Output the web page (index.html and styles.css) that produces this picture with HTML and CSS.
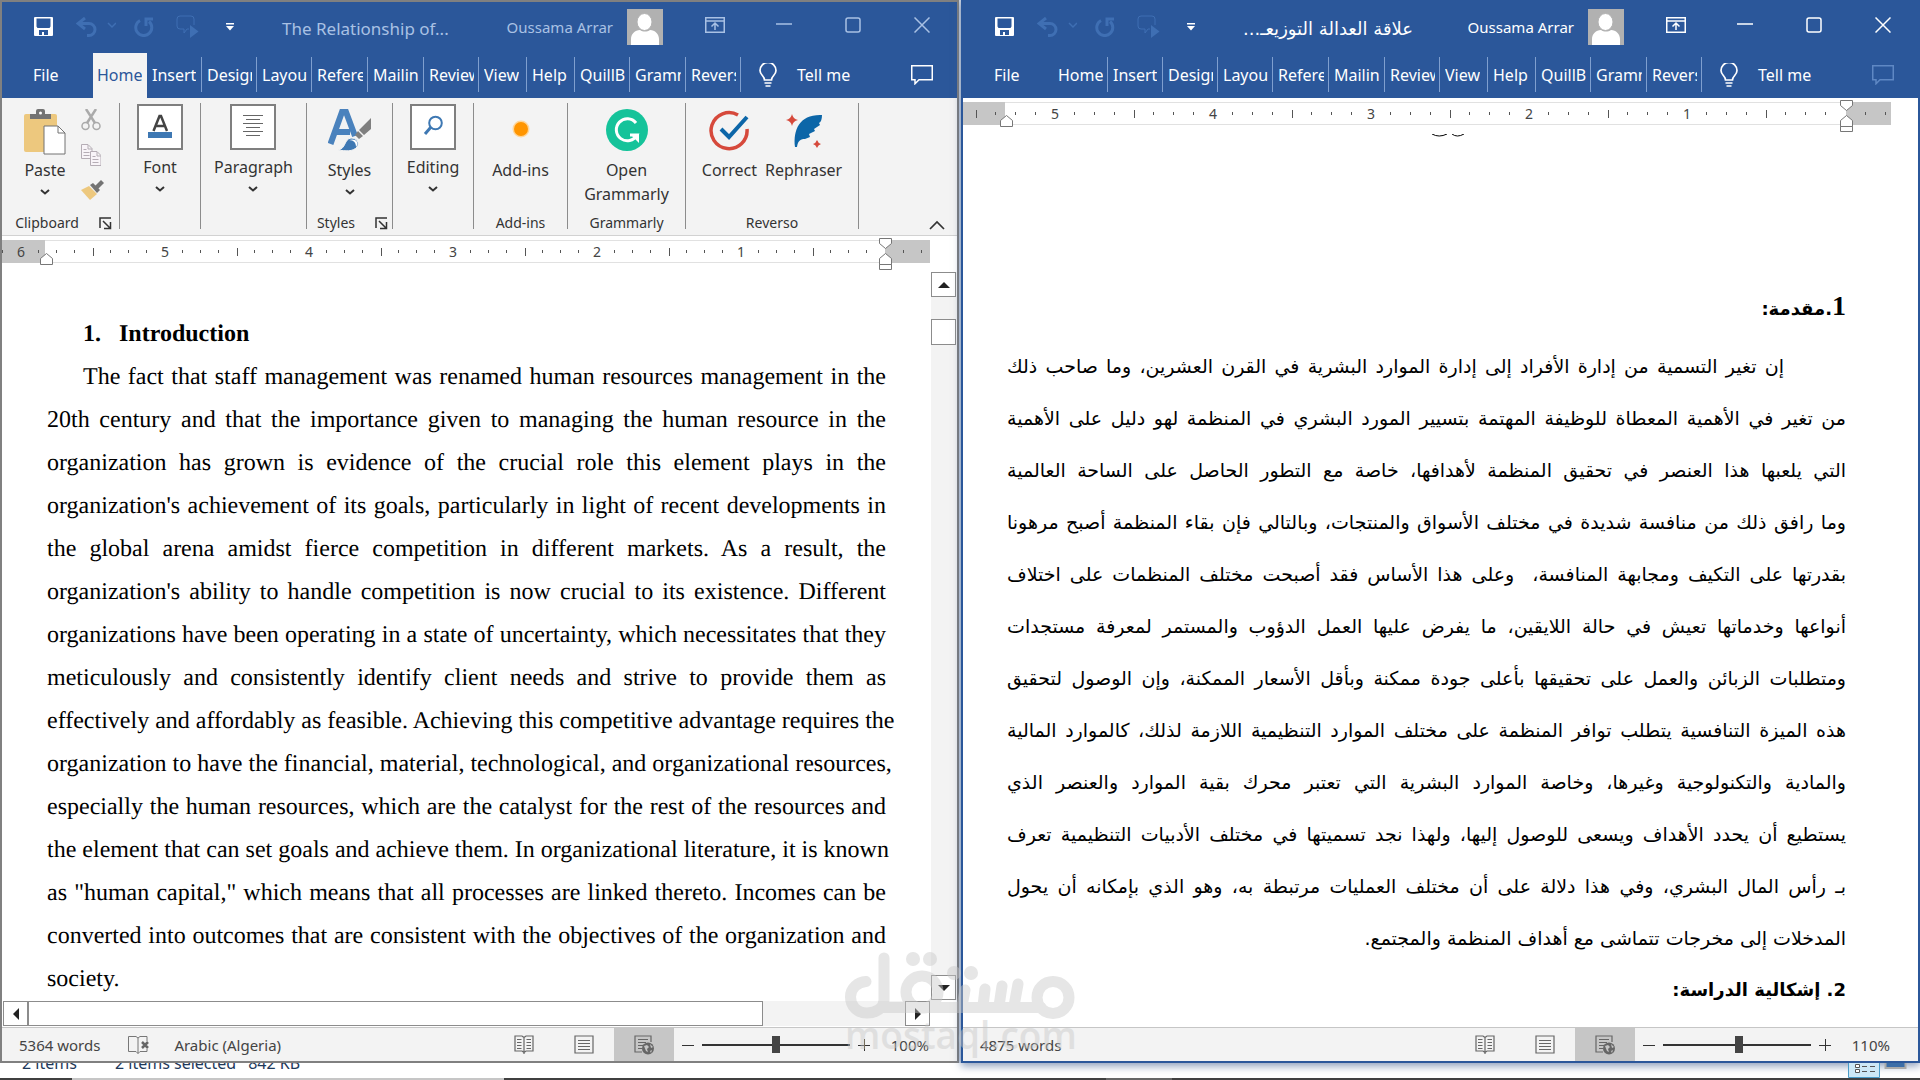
FILE: index.html
```html
<!DOCTYPE html>
<html lang="en">
<head>
<meta charset="utf-8">
<title>Word - side by side</title>
<link rel="stylesheet" href="styles.css">
</head>
<body>
<svg class="defs" aria-hidden="true">
  <symbol id="i-save" viewBox="0 0 19 19"><path fill="currentColor" fill-rule="evenodd" d="M0 1a1 1 0 0 1 1-1h17a1 1 0 0 1 1 1v17a1 1 0 0 1-1 1H1a1 1 0 0 1-1-1zM2.500 1.500v8l1 1.500h12l1-1.500v-8zM5 13v5h3v-3h2v3h4v-5z"/></symbol>
  <symbol id="i-undo" viewBox="0 0 40 20"><path d="M9 1 2 6.500l7 5.500M3 6.500h10a6 6 0 0 1 0 12h-2" fill="none" stroke="currentColor" stroke-width="3"/><path d="m32 6 4 4 4-4" fill="none" stroke="currentColor" stroke-width="1.500"/></symbol>
  <symbol id="i-redo" viewBox="0 0 20 20"><path d="M6 3.500a8 8 0 1 0 9 1" fill="none" stroke="currentColor" stroke-width="3"/><path d="M12 9V2h7" fill="none" stroke="currentColor" stroke-width="3"/></symbol>
  <symbol id="i-present" viewBox="0 0 23 24"><path d="M13 14h-2l-3 4v-4H4a3 3 0 0 1-3-3V4a3 3 0 0 1 3-3h11a3 3 0 0 1 3 3v6" fill="none" stroke="currentColor" stroke-width="1"/><path d="m14 10 8.500 6.500L14 23z" fill="currentColor"/></symbol>
  <symbol id="i-custom" viewBox="0 0 8 8"><path d="M0 0h8v1.500H0zM0 3h8L4 7.500z" fill="currentColor"/></symbol>
  <symbol id="i-ribbonopt" viewBox="0 0 20 16"><path d="M.75.75h18.500v14.500H.75zM1 4h18M10 13V6.500M6.500 9.500 10 6l3.500 3.500" fill="none" stroke="currentColor" stroke-width="1.500"/></symbol>
  <symbol id="i-min" viewBox="0 0 16 16"><path d="M0 7h16" stroke="currentColor" stroke-width="1.500"/></symbol>
  <symbol id="i-max" viewBox="0 0 16 16"><rect x="1" y="1" width="14" height="14" rx="2" fill="none" stroke="currentColor" stroke-width="1.500"/></symbol>
  <symbol id="i-close" viewBox="0 0 16 16"><path d="m.5.5 15 15m0-15-15 15" stroke="currentColor" stroke-width="1.500"/></symbol>
  <symbol id="i-avatar" viewBox="0 0 36 36"><path fill="#b1b1b1" d="M0 0h36v36H0z"/><path fill="#fff" d="M4 36v-6c0-5 4-9 9-9 3 2 7 2 10 0 5 0 9 4 9 9v6z"/><ellipse cx="17.500" cy="13" rx="7.500" ry="8.500" fill="#fff" stroke="#b1b1b1"/></symbol>
  <symbol id="i-bulb" viewBox="0 0 18 24"><path d="M5.500 17c0-4-4.500-5-4.500-9.500a8 8 0 0 1 16 0C17 12 12.500 13 12.500 17zM5.500 20h7M6.500 23h5" fill="none" stroke="currentColor" stroke-width="1.700"/></symbol>
  <symbol id="i-comment" viewBox="0 0 22 20"><path d="M.75.75h20.500v14H8l-4 4v-4H.75z" fill="none" stroke="currentColor" stroke-width="1.500"/></symbol>
  <symbol id="i-chev" viewBox="0 0 10 6"><path d="m1 1 4 3.500L9 1" fill="none" stroke="#333" stroke-width="2"/></symbol>
  <symbol id="i-launch" viewBox="0 0 13 13"><path d="M1 11V1h11M4 4l7 7M11.500 5v6.500H5" fill="none" stroke="#333" stroke-width="1.500"/></symbol>
  <symbol id="i-read" viewBox="0 0 20 19"><path d="M1 1h7l2 1.500L12 1h7v15h-7l-2 1.500L8 16H1zM10 2v17M3 4.500h4.500M3 7.500h4.500M3 10.500h4.500M3 13.500h4.500M12.500 4.500H17M12.500 7.500H17M12.500 10.500H17M12.500 13.500H17" fill="none" stroke="#666" stroke-width="1.200"/></symbol>
  <symbol id="i-print" viewBox="0 0 20 19"><path d="M1 1h18v17H1zM4 5.500h12M4 8.500h12M4 11.500h12M4 14.500h12" fill="none" stroke="#666" stroke-width="1.200"/></symbol>
  <symbol id="i-web" viewBox="0 0 20 20"><path d="M8 17H1V1h16v6M4 4.500h10M4 7.500h8M4 10.500h5M4 13.500h4" fill="none" stroke="#666" stroke-width="1.200"/><circle cx="14" cy="13.500" r="6" fill="#666"/><path d="m10 11 3-1 2 2-2 2 1 3-2-1zM16 9l3 3-2 1zM16 16l2-1-1 3z" fill="#c6c6c6"/></symbol>
</svg>

<main class="desktop">
  <section class="window inactive" lang="en">
    <header class="titlebar">
      <button class="qa save" aria-label="Save"><svg width="19" height="19"><use href="#i-save"/></svg></button>
      <button class="qa undo off" aria-label="Undo"><svg width="40" height="20"><use href="#i-undo"/></svg></button>
      <button class="qa redo off" aria-label="Repeat"><svg width="20" height="20"><use href="#i-redo"/></svg></button>
      <button class="qa present off" aria-label="Present"><svg width="23" height="24"><use href="#i-present"/></svg></button>
      <button class="qa redo" aria-label="Customize"><svg width="8" height="8"><use href="#i-custom"/></svg></button>
      <h1 class="doc-title">The Relationship of...</h1>
      <span class="user">Oussama Arrar</span>
      <svg class="avatar" width="36" height="36"><use href="#i-avatar"/></svg>
      <button class="win-btn" aria-label="Ribbon options"><svg width="20" height="16"><use href="#i-ribbonopt"/></svg></button>
      <button class="win-btn" aria-label="Minimize"><svg width="16" height="16"><use href="#i-min"/></svg></button>
      <button class="win-btn" aria-label="Maximize"><svg width="16" height="16"><use href="#i-max"/></svg></button>
      <button class="win-btn" aria-label="Close"><svg width="16" height="16"><use href="#i-close"/></svg></button>
    </header>
    <nav class="tabs">
      <button class="file">File</button>
      <button class="tab active"><span>Home</span></button>
      <button class="tab"><span>Insert</span></button>
      <button class="tab"><span>Design</span></button>
      <button class="tab"><span>Layout</span></button>
      <button class="tab wide"><span>References</span></button>
      <button class="tab wide"><span>Mailings</span></button>
      <button class="tab"><span>Review</span></button>
      <button class="tab narrow"><span>View</span></button>
      <button class="tab narrow"><span>Help</span></button>
      <button class="tab"><span>QuillBot</span></button>
      <button class="tab wide"><span>Grammarly</span></button>
      <button class="tab"><span>Reverso</span></button>
      <button class="tell"><svg width="18" height="24"><use href="#i-bulb"/></svg>Tell me</button>
      <button class="comment" aria-label="Comments"><svg width="22" height="20"><use href="#i-comment"/></svg></button>
    </nav>

    <div class="ribbon">
      <div class="group clipboard">
        <div class="group-body">
          <button class="big">
            <svg width="42" height="46" viewBox="0 0 42 46"><rect y="5" width="33" height="38" rx="2" fill="#edc87e"/><path d="M6 10V5h6V2a2 2 0 0 1 2-2h5a2 2 0 0 1 2 2v3h6v5z" fill="#737373"/><circle cx="16.500" cy="4" r="1.500" fill="#fff"/><path d="M20 17h14l7 7v21H20z" fill="#fff" stroke="#737373"/><path d="M34 17v7h7" fill="none" stroke="#737373"/></svg>
            <span>Paste</span><svg width="10" height="6"><use href="#i-chev"/></svg>
          </button>
          <div class="small-tools">
            <button aria-label="Cut"><svg width="20" height="22" viewBox="0 0 20 22"><path d="m5 0 9 14M15 0 6 14" stroke="#aaa" stroke-width="2.500"/><circle cx="4.500" cy="17" r="3.500" fill="none" stroke="#aaa" stroke-width="1.500"/><circle cx="15.500" cy="17" r="3.500" fill="none" stroke="#aaa" stroke-width="1.500"/></svg></button>
            <button aria-label="Copy"><svg width="20" height="22" viewBox="0 0 20 22"><g fill="#f8f4f8" stroke="#b5adb5"><path d="M.5.5H7l4 4v10H.5zM7 1v4h4M2.500 5.500h3m-3 3h6m-6 3h6"/><path d="M9.500 7.500H16l4 4v10H9.500zM16 8v4h4m-8.500.500h3m-3 3h6m-6 3h6"/></g></svg></button>
            <button aria-label="Format painter"><svg width="23" height="20" viewBox="0 0 23 20"><path d="m0 10 8-4 8 8-7 6z" fill="#edc87e"/><path d="m9 5 3-2 7 7-3 3z" fill="#737373"/><path d="m14 6 6-6 3 3-6 6z" fill="#737373"/></svg></button>
          </div>
        </div>
        <div class="group-label with-launcher"><span>Clipboard</span><button aria-label="Clipboard options"><svg width="13" height="13"><use href="#i-launch"/></svg></button></div>
      </div>
      <div class="group g-font">
        <div class="group-body"><button class="big boxed">
          <svg width="46" height="46" viewBox="0 0 46 46"><path d="M1 1h44v44H1z" fill="#fff" stroke="#7f7f7f" stroke-width="2"/><path d="m16.500 27 6-15h1.500l6 15M19 22h9" fill="none" stroke="#444" stroke-width="2.500"/><path d="M11 28h24v6H11z" fill="#3e78b3"/></svg>
          <span>Font</span><svg width="10" height="6"><use href="#i-chev"/></svg></button></div>
      </div>
      <div class="group g-para">
        <div class="group-body"><button class="big boxed">
          <svg width="46" height="46" viewBox="0 0 46 46"><path d="M1 1h44v44H1z" fill="#fff" stroke="#7f7f7f" stroke-width="2"/><path d="M13 11.500h20M16 15.500h14M13 19.500h20M16 23.500h14M13 27.500h20M16 31.500h14" stroke="#666"/></svg>
          <span>Paragraph</span><svg width="10" height="6"><use href="#i-chev"/></svg></button></div>
      </div>
      <div class="group g-styles">
        <div class="group-body"><button class="big">
          <svg width="44" height="46" viewBox="0 0 44 46"><path d="M2.500 35 14 3h4l9 24M7 23h15" fill="none" stroke="#4a82bd" stroke-width="6"/><path d="M43 9v11l-7 6-5-5zM30 22l5 5-4 3-4-4z" fill="#7f7f7f"/><path d="M10 41c8-1 6-11 13-12 6 0 9 5 6 9-4 5-12 4-19 3z" fill="#3e78b3" stroke="#f3f3f3"/><path d="M21 31c5 0 7 3 7 7 4-5-1-9-7-7z" fill="#fff"/></svg>
          <span>Styles</span><svg width="10" height="6"><use href="#i-chev"/></svg></button></div>
        <div class="group-label with-launcher"><span>Styles</span><button aria-label="Styles options"><svg width="13" height="13"><use href="#i-launch"/></svg></button></div>
      </div>
      <div class="group g-font">
        <div class="group-body"><button class="big boxed">
          <svg width="46" height="46" viewBox="0 0 46 46"><path d="M1 1h44v44H1z" fill="#fff" stroke="#7f7f7f" stroke-width="2"/><circle cx="25.500" cy="19" r="6.300" fill="none" stroke="#3e78b3" stroke-width="2"/><path d="m21 23-6 7" stroke="#3e78b3" stroke-width="3"/></svg>
          <span>Editing</span><svg width="10" height="6"><use href="#i-chev"/></svg></button></div>
      </div>
      <div class="group g-addins">
        <div class="group-body"><button class="big">
          <svg width="44" height="46" viewBox="0 0 44 46"><circle cx="22" cy="20" r="8.500" fill="#ffd699"/><circle cx="22" cy="20" r="7" fill="#ff9500"/></svg>
          <span>Add-ins</span></button></div>
        <div class="group-label"><span>Add-ins</span></div>
      </div>
      <div class="group g-gram">
        <div class="group-body"><button class="big">
          <svg width="44" height="46" viewBox="0 0 44 46"><circle cx="22" cy="21" r="21" fill="#15c39a"/><path d="M31 14a11 11 0 1 0 1 12h-7" fill="none" stroke="#fff" stroke-width="3"/><path d="M25 25h9v9z" fill="#fff"/></svg>
          <span>Open<br>Grammarly</span></button></div>
        <div class="group-label"><span>Grammarly</span></div>
      </div>
      <div class="group g-reverso">
        <div class="group-body">
          <button class="big"><svg width="44" height="46" viewBox="0 0 44 46"><path d="M31 6A18 18 0 1 0 40 20" fill="none" stroke="#d6493b" stroke-width="3.500"/><path d="m14 20 8 8L40 8" fill="none" stroke="#0c66a8" stroke-width="4"/></svg><span>Correct</span></button>
          <button class="big"><svg width="44" height="46" viewBox="0 0 44 46"><path d="M13 38C11 20 18 5 40 6c0 4-1 7-3 8l1 2-6 4 1 2-6 3 1 3-5 2c-4 0-7 1-8 8z" fill="#0c66a8"/><path d="M10 5q1 5 6 6-5 1-6 6-1-5-6-6 5-1 6-6zM35 31q1 3 4 4-3 1-4 4-1-3-4-4 3-1 4-4z" fill="#d6493b"/></svg><span>Rephraser</span></button>
        </div>
        <div class="group-label"><span>Reverso</span></div>
      </div>
      <button class="collapse" aria-label="Collapse ribbon"><svg width="16" height="10" viewBox="0 0 16 10"><path d="m1 9 7-7 7 7" fill="none" stroke="#333" stroke-width="1.700"/></svg></button>
    </div>

    <div class="ruler">
      <svg width="928" height="36" viewBox="0 0 928 36">
        <defs><pattern id="t144" x="18" width="144" height="36" patternUnits="userSpaceOnUse"><path d="M18.500 14v3M36.500 14v3M54.500 14v3M73.500 12v8M90.500 14v3M108.500 14v3M126.500 14v3" stroke="#555"/></pattern></defs>
        <path d="M0 4.500h928M0 26.500h928" stroke="#e1e1e1"/><path d="M0 4h43v23H0zM883 4h45v23h-45z" fill="#c6c6c6"/>
        <path d="M0 0h883v36H0z" fill="url(#t144)"/><path d="M901.500 14v3M919.500 14v3" stroke="#555"/>
        <g class="nums"><text x="19" y="21">6</text><text x="163" y="21">5</text><text x="307" y="21">4</text><text x="451" y="21">3</text><text x="595" y="21">2</text><text x="739" y="21">1</text></g>
        <path d="M38.500 28.500v-6l6-5 6 5v6zM877.500 2.500h12v5l-6 5-6-5zM877.500 28.500v-6l6-5 6 5v6zM877.500 28.500h12v5h-12z" fill="#fff" stroke="#777"/>
      </svg>
    </div>

    <div class="doc-row">
      <article class="page page-en">
        <h2><span class="num">1.</span>Introduction</h2>
        <p>
          <span class="line first">The fact that staff management was renamed human resources management in the</span>
          <span class="line">20th century and that the importance given to managing the human resource in the</span>
          <span class="line">organization has grown is evidence of the crucial role this element plays in the</span>
          <span class="line">organization's achievement of its goals, particularly in light of recent developments in</span>
          <span class="line">the global arena amidst fierce competition in different markets. As a result, the</span>
          <span class="line">organization's ability to handle competition is now crucial to its existence. Different</span>
          <span class="line">organizations have been operating in a state of uncertainty, which necessitates that they</span>
          <span class="line">meticulously and consistently identify client needs and strive to provide them as</span>
          <span class="line">effectively and affordably as feasible. Achieving this competitive advantage requires the</span>
          <span class="line">organization to have the financial, material, technological, and organizational resources,</span>
          <span class="line">especially the human resources, which are the catalyst for the rest of the resources and</span>
          <span class="line">the element that can set goals and achieve them. In organizational literature, it is known</span>
          <span class="line">as "human capital," which means that all processes are linked thereto. Incomes can be</span>
          <span class="line">converted into outcomes that are consistent with the objectives of the organization and</span>
          <span class="line last">society.</span>
        </p>
      </article>
      <div class="vscroll">
        <button class="sb" aria-label="Scroll up"><svg width="12" height="6" viewBox="0 0 12 6"><path d="m0 6 6-6 6 6z" fill="#222"/></svg></button>
        <div class="vthumb"></div>
        <button class="sb end" aria-label="Scroll down"><svg width="12" height="6" viewBox="0 0 12 6"><path d="m0 0 6 6 6-6z" fill="#222"/></svg></button>
      </div>
    </div>
    <div class="hscroll">
      <button class="sb" aria-label="Scroll left"><svg width="6" height="12" viewBox="0 0 6 12"><path d="M6 0 0 6l6 6z" fill="#222"/></svg></button>
      <div class="hthumb"></div>
      <button class="sb end" aria-label="Scroll right"><svg width="6" height="12" viewBox="0 0 6 12"><path d="m0 0 6 6-6 6z" fill="#222"/></svg></button>
    </div>
    <footer class="status">
      <span class="words">5364 words</span>
      <svg class="proof" width="22" height="18" viewBox="0 0 22 18"><path d="M10 2 8 .5H.5v15H8l2 2zM10 2l2-1.500h7V5M10 17.500l2-2h7V13" fill="none" stroke="#777"/><path d="m14 6 6 6m0-6-6 6" stroke="#666" stroke-width="2.500"/></svg>
      <span>Arabic (Algeria)</span>
      <button class="view first-view" aria-label="Read mode"><svg width="20" height="19"><use href="#i-read"/></svg></button>
      <button class="view" aria-label="Print layout"><svg width="20" height="19"><use href="#i-print"/></svg></button>
      <button class="view on" aria-label="Web layout"><svg width="20" height="20"><use href="#i-web"/></svg></button>
      <button class="zoom-btn" aria-label="Zoom out"><svg width="12" height="12" viewBox="0 0 12 12"><path d="M0 6.500h12" stroke="#333"/></svg></button>
      <input class="zoom" type="range" min="0" max="200" value="100" aria-label="Zoom">
      <button class="zoom-btn" aria-label="Zoom in"><svg width="12" height="12" viewBox="0 0 12 12"><path d="M0 6.500h12M6.500 0v12" stroke="#333"/></svg></button>
      <span class="pct">100%</span>
    </footer>
  </section>

  <section class="window current">
    <header class="titlebar">
      <button class="qa save" aria-label="Save"><svg width="19" height="19"><use href="#i-save"/></svg></button>
      <button class="qa undo off" aria-label="Undo"><svg width="40" height="20"><use href="#i-undo"/></svg></button>
      <button class="qa redo off" aria-label="Repeat"><svg width="20" height="20"><use href="#i-redo"/></svg></button>
      <button class="qa present off" aria-label="Present"><svg width="23" height="24"><use href="#i-present"/></svg></button>
      <button class="qa redo" aria-label="Customize"><svg width="8" height="8"><use href="#i-custom"/></svg></button>
      <h1 class="doc-title ar-title" lang="ar" dir="rtl">علاقة العدالة التوزيعـ...</h1>
      <span class="user">Oussama Arrar</span>
      <svg class="avatar" width="36" height="36"><use href="#i-avatar"/></svg>
      <button class="win-btn" aria-label="Ribbon options"><svg width="20" height="16"><use href="#i-ribbonopt"/></svg></button>
      <button class="win-btn" aria-label="Minimize"><svg width="16" height="16"><use href="#i-min"/></svg></button>
      <button class="win-btn" aria-label="Maximize"><svg width="16" height="16"><use href="#i-max"/></svg></button>
      <button class="win-btn" aria-label="Close"><svg width="16" height="16"><use href="#i-close"/></svg></button>
    </header>
    <nav class="tabs">
      <button class="file">File</button>
      <button class="tab first-tab"><span>Home</span></button>
      <button class="tab"><span>Insert</span></button>
      <button class="tab"><span>Design</span></button>
      <button class="tab"><span>Layout</span></button>
      <button class="tab wide"><span>References</span></button>
      <button class="tab wide"><span>Mailings</span></button>
      <button class="tab"><span>Review</span></button>
      <button class="tab narrow"><span>View</span></button>
      <button class="tab narrow"><span>Help</span></button>
      <button class="tab"><span>QuillBot</span></button>
      <button class="tab wide"><span>Grammarly</span></button>
      <button class="tab"><span>Reverso</span></button>
      <button class="tell"><svg width="18" height="24"><use href="#i-bulb"/></svg>Tell me</button>
      <button class="comment off" aria-label="Comments"><svg width="22" height="20"><use href="#i-comment"/></svg></button>
    </nav>
    <div class="ruler">
      <svg width="928" height="36" viewBox="0 0 928 36">
        <defs><pattern id="t158" x="91" width="158" height="36" patternUnits="userSpaceOnUse"><path d="M20.500 14v3M40.500 14v3M60.500 14v3M80.500 12v8M99.500 14v3M119.500 14v3M139.500 14v3" stroke="#555"/></pattern></defs>
        <path d="M0 4.500h928M0 26.500h928" stroke="#e1e1e1"/><path d="M0 4h42v23H0zM883 4h45v23h-45z" fill="#c6c6c6"/>
        <path d="M0 0h883v36H0z" fill="url(#t158)"/><path d="M902.500 14v3M922.500 14v3" stroke="#555"/>
        <g class="nums"><text x="92" y="21">5</text><text x="250" y="21">4</text><text x="408" y="21">3</text><text x="566" y="21">2</text><text x="724" y="21">1</text></g>
        <path d="M37.500 28.500v-6l6-5 6 5v6zM877.500 2.500h12v5l-6 5-6-5zM877.500 28.500v-6l6-5 6 5v6zM877.500 28.500h12v5h-12z" fill="#fff" stroke="#777"/>
      </svg>
    </div>
    <div class="doc-row">
      <article class="page page-ar" lang="ar" dir="rtl">
        <svg class="cutline" width="32" height="4" viewBox="0 0 32 4"><path d="M0 0q7 4 15 0M20 0q5 4 12 0" fill="none" stroke="#000"/></svg>
        <h2 class="h-intro"><span class="big-num">1</span>.مقدمة:</h2>
        <p>
          <span class="line first">إن تغير التسمية من إدارة الأفراد إلى إدارة الموارد البشرية في القرن العشرين، وما صاحب ذلك</span>
          <span class="line">من تغير في الأهمية المعطاة للوظيفة المهتمة بتسيير المورد البشري في المنظمة لهو دليل على الأهمية</span>
          <span class="line">التي يلعبها هذا العنصر في تحقيق المنظمة لأهدافها، خاصة مع التطور الحاصل على الساحة العالمية</span>
          <span class="line">وما رافق ذلك من منافسة شديدة في مختلف الأسواق والمنتجات، وبالتالي فإن بقاء المنظمة أصبح مرهونا</span>
          <span class="line">بقدرتها على التكيف ومجابهة المنافسة،&nbsp; وعلى هذا الأساس فقد أصبحت مختلف المنظمات على اختلاف</span>
          <span class="line">أنواعها وخدماتها تعيش في حالة اللايقين، ما يفرض عليها العمل الدؤوب والمستمر لمعرفة مستجدات</span>
          <span class="line">ومتطلبات الزبائن والعمل على تحقيقها بأعلى جودة ممكنة وبأقل الأسعار الممكنة، وإن الوصول لتحقيق</span>
          <span class="line">هذه الميزة التنافسية يتطلب توافر المنظمة على مختلف الموارد التنظيمية اللازمة لذلك، كالموارد المالية</span>
          <span class="line">والمادية والتكنولوجية وغيرها، وخاصة الموارد البشرية التي تعتبر محرك بقية الموارد والعنصر الذي</span>
          <span class="line">يستطيع أن يحدد الأهداف ويسعى للوصول إليها، ولهذا نجد تسميتها في مختلف الأدبيات التنظيمية تعرف</span>
          <span class="line">بـ رأس المال البشري، وفي هذا دلالة على أن مختلف العمليات مرتبطة به، وهو الذي بإمكانه أن يحول</span>
          <span class="line last">المدخلات إلى مخرجات تتماشى مع أهداف المنظمة والمجتمع.</span>
        </p>
        <h2>2. إشكالية الدراسة:</h2>
      </article>
    </div>
    <footer class="status">
      <span class="words">4875 words</span>
      <button class="view first-view" aria-label="Read mode"><svg width="20" height="19"><use href="#i-read"/></svg></button>
      <button class="view" aria-label="Print layout"><svg width="20" height="19"><use href="#i-print"/></svg></button>
      <button class="view on" aria-label="Web layout"><svg width="20" height="20"><use href="#i-web"/></svg></button>
      <button class="zoom-btn" aria-label="Zoom out"><svg width="12" height="12" viewBox="0 0 12 12"><path d="M0 6.500h12" stroke="#333"/></svg></button>
      <input class="zoom" type="range" min="0" max="200" value="103" aria-label="Zoom">
      <button class="zoom-btn" aria-label="Zoom in"><svg width="12" height="12" viewBox="0 0 12 12"><path d="M0 6.500h12M6.500 0v12" stroke="#333"/></svg></button>
      <span class="pct">110%</span>
    </footer>
  </section>
</main>

<div class="explorer">
  <span class="count">2 items</span><span>2 items selected</span><span class="size">842 KB</span>
  <svg class="modes" width="60" height="15" viewBox="0 0 60 15"><path d="M.5-1h31v15.500H.5z" fill="#cce8f6" stroke="#4a9cc8"/><path d="M7.500 1.500h4v3h-4zM7.500 6.500h4v3h-4z" fill="#fff" stroke="#555"/><path d="M14 3.500h5m3 0h5M14 8.500h5m3 0h5" stroke="#555"/><path d="M37.500-1h20v6h-20z" fill="#3c6ea8" stroke="#aaa" stroke-width="2"/></svg>
</div>
<div class="taskbar"><i class="seg-a"></i><i class="seg-b"></i></div>

<div class="watermark" aria-hidden="true">
  <svg width="230" height="68" viewBox="0 0 230 68"><g fill="none" stroke="#c8c8c8" stroke-width="11" stroke-linecap="round" stroke-linejoin="round"><path d="M39 6v42c0 8-8 13-17 13C12 61 5.500 54 5.500 45S13 30 21 29.500M36 55.500h160M120 38l-3 16M140 37l-2 17M157 34l-3 20M173 32l-4 22"/><circle cx="77" cy="40" r="16"/><circle cx="208" cy="45.500" r="16"/></g><g fill="#c8c8c8"><circle cx="68" cy="7" r="7"/><circle cx="85" cy="7" r="7"/><circle cx="109" cy="21" r="7"/><circle cx="126" cy="21" r="7"/></g></svg>
  <span>mostaql.com</span>
</div>
</body>
</html>
```

FILE: styles.css
```css
* { box-sizing: border-box; }

body {
  margin: 0;
  min-height: 100vh;
  display: flex;
  flex-direction: column;
  position: relative;
  overflow: hidden;
  background: #fff;
  color: #333;
  font: 16px/24px "Noto Sans", "Open Sans", sans-serif;
}

.defs { display: none; }
svg { display: block; flex: none; }

button {
  border: 0;
  padding: 0;
  background: none;
  color: inherit;
  font: inherit;
}

h1, h2, p { margin: 0; }

.desktop {
  flex: 1;
  display: grid;
  grid-template-columns: 1fr 1fr;
  gap: 2px;
  background: #c9d3e2;
}

.window {
  display: flex;
  flex-direction: column;
  min-width: 0;
  background: #fff;
}
.inactive { border: 2px solid #808080; }
.current {
  border: 2px solid #2b579a;
  border-top: 0;
  box-shadow: 0 3px 8px #3f5b8c99;
}

/* Title bar */
.titlebar {
  display: flex;
  align-items: center;
  height: 51px;
  padding: 0 1px 2px 22px;
  background: #2b579a;
  color: #a9c1e4;
}
.current .titlebar { height: 53px; padding-bottom: 0; color: #fff; }
.qa { display: flex; justify-content: center; color: #fff; }
.qa.save { width: 38px; }
.qa.undo { width: 68px; }
.qa.redo { width: 28px; }
.qa.present { width: 58px; }
.qa.off { color: #3f6fb3; }
.doc-title {
  margin-left: 38px;
  padding-top: 4px;
  font-size: 17px;
  font-weight: 400;
  white-space: nowrap;
}
.ar-title { font-family: "DejaVu Sans", sans-serif; font-size: 18px; }
.user { margin-left: auto; font-size: 15px; }
.avatar { margin: 0 17px 0 14px; }
.win-btn { width: 69px; display: flex; justify-content: center; padding-bottom: 4px; }

/* Tabs */
.tabs {
  display: flex;
  height: 45px;
  background: #2b579a;
  color: #fff;
}
.tabs button { padding-bottom: 2px; }
.tabs .file { width: 91px; padding-left: 31px; text-align: left; }
.tabs .tab {
  display: flex;
  align-items: center;
  position: relative;
  width: 55px;
  padding: 0 5px 2px;
  text-align: left;
}
.tab span { overflow: hidden; white-space: nowrap; }
.tab::after {
  content: "";
  position: absolute;
  right: 0;
  top: 4px;
  width: 1px;
  height: 35px;
  background: #7f9fcf;
}
.tabs .wide { width: 56px; }
.tabs .narrow { width: 48px; }
.tabs .active, .tabs .first-tab { width: 54px; padding-left: 4px; }
.active { background: #f3f3f3; color: #2b579a; }
.active::after { display: none; }
.tell { display: flex; align-items: center; gap: 20px; margin-left: 18px; }
.comment { margin: 0 24px 0 auto; }
.comment.off { color: #5f88c4; }

/* Ribbon */
.ribbon {
  display: flex;
  height: 138px;
  padding-top: 5px;
  background: #f3f3f3;
  border-bottom: 1px solid #d2d2d2;
}
.group {
  display: flex;
  flex-direction: column;
  height: 126px;
  border-right: 1px solid #8c8c8c;
}
.clipboard { width: 118px; }
.g-font { width: 81px; }
.g-para { width: 106px; }
.g-styles { width: 86px; }
.g-addins { width: 94px; }
.g-gram { width: 118px; }
.g-reverso { width: 173px; }
.group-body { flex: 1; display: flex; justify-content: center; }
.big {
  display: flex;
  flex-direction: column;
  align-items: center;
  padding-top: 6px;
  white-space: nowrap;
}
.big span { margin: 3px 0 7px; }
.boxed { padding-top: 1px; }
.boxed span { margin-top: 5px; }
.clipboard .group-body { justify-content: flex-start; padding-left: 22px; gap: 15px; }
.g-reverso .group-body { gap: 8px; }
.small-tools { display: flex; flex-direction: column; gap: 13px; padding-top: 6px; }
.small-tools button { height: 22px; }
.group-label {
  display: flex;
  align-items: center;
  justify-content: center;
  gap: 20px;
  height: 12px;
  font-size: 14px;
}
.with-launcher { padding-left: 6px; }
.collapse { margin: auto 12px 5px auto; }

/* Rulers */
.ruler { height: 36px; }
.nums text { font-size: 14px; fill: #444; text-anchor: middle; }

/* Documents */
.doc-row { flex: 1; display: flex; }
.page { flex: 1; min-width: 0; color: #000; }
.page h2 { font-weight: 700; }
.line { display: block; text-align: justify; text-align-last: justify; white-space: nowrap; }
.line.last { text-align-last: start; }

.page-en {
  margin-bottom: -2px;
  padding: 41px 45px 0;
  font: 24px/43px "Liberation Serif", serif;
  text-rendering: geometricPrecision;
}
.page-en h2 { font-size: 24px; padding-left: 36px; }
.page-en .first { padding-left: 36px; }
.num { display: inline-block; width: 36px; }

.page-ar {
  padding: 0 72px 0 44px;
  font: 19px/52px "DejaVu Sans", sans-serif;
}
.page-ar h2 { font-size: 18px; }
.page-ar .first { padding-right: 62px; }
.page-ar .h-intro { margin: 142px 0 5px; }
.big-num { font: 700 28px/52px "Liberation Serif", serif; }
.cutline { margin-right: 382px; }

/* Scroll bars */
.vscroll {
  display: flex;
  flex-direction: column;
  width: 26px;
  background: #f3f3f3;
}
.sb {
  display: flex;
  align-items: center;
  justify-content: center;
  flex: none;
  width: 25px;
  height: 25px;
  border: 1px solid #8c8c8c;
  background: #fff;
}
.vthumb { width: 25px; height: 26px; margin-top: 22px; border: 1px solid #8c8c8c; background: #fff; }
.vscroll .end { margin-top: auto; }
.hscroll {
  display: flex;
  margin: 1px 27px 1px 1px;
  background: #f3f3f3;
}
.hthumb { width: 735px; border: 1px solid #8c8c8c; background: #fff; }
.hscroll .end { margin-left: auto; }

/* Status bar */
.status {
  display: flex;
  align-items: center;
  height: 34px;
  padding: 0 28px 0 17px;
  border-top: 1px solid #c6c6c6;
  background: #f3f3f3;
  font-size: 15px;
  color: #444;
}
.proof { margin: 0 24px 0 28px; }
.first-view { margin-left: auto; }
.view { display: flex; align-items: center; justify-content: center; width: 60px; height: 33px; }
.view.on { background: #c6c6c6; margin-right: 8px; }
.zoom {
  appearance: none;
  width: 148px;
  height: 18px;
  margin: 0 8px;
  background: linear-gradient(#333, #333) center / 100% 2px no-repeat;
}
.zoom::-webkit-slider-thumb { appearance: none; width: 8px; height: 17px; background: #444; }
.pct { width: 41px; margin-left: 18px; text-align: right; }

/* File explorer status strip and taskbar edge behind the windows */
.explorer {
  display: flex;
  align-items: flex-end;
  height: 15px;
  padding: 0 12px 3px 22px;
  overflow: hidden;
  color: #1e395b;
}
.explorer .count { width: 93px; }
.explorer .size { margin-left: 12px; }
.modes { margin-left: auto; align-self: flex-start; }
.taskbar { display: flex; height: 2px; background: #404040; }
.seg-a { width: 432px; margin-left: 72px; background: #c6c6c6; }
.seg-b { width: 66px; margin-left: 602px; background: #666; }

.watermark {
  position: absolute;
  left: 50%;
  bottom: 30px;
  width: 230px;
  margin-left: -115px;
  opacity: .45;
  color: #c8c8c8;
  font: 600 37px/30px "Open Sans", "Noto Sans", sans-serif;
  text-align: center;
  pointer-events: none;
}
```
